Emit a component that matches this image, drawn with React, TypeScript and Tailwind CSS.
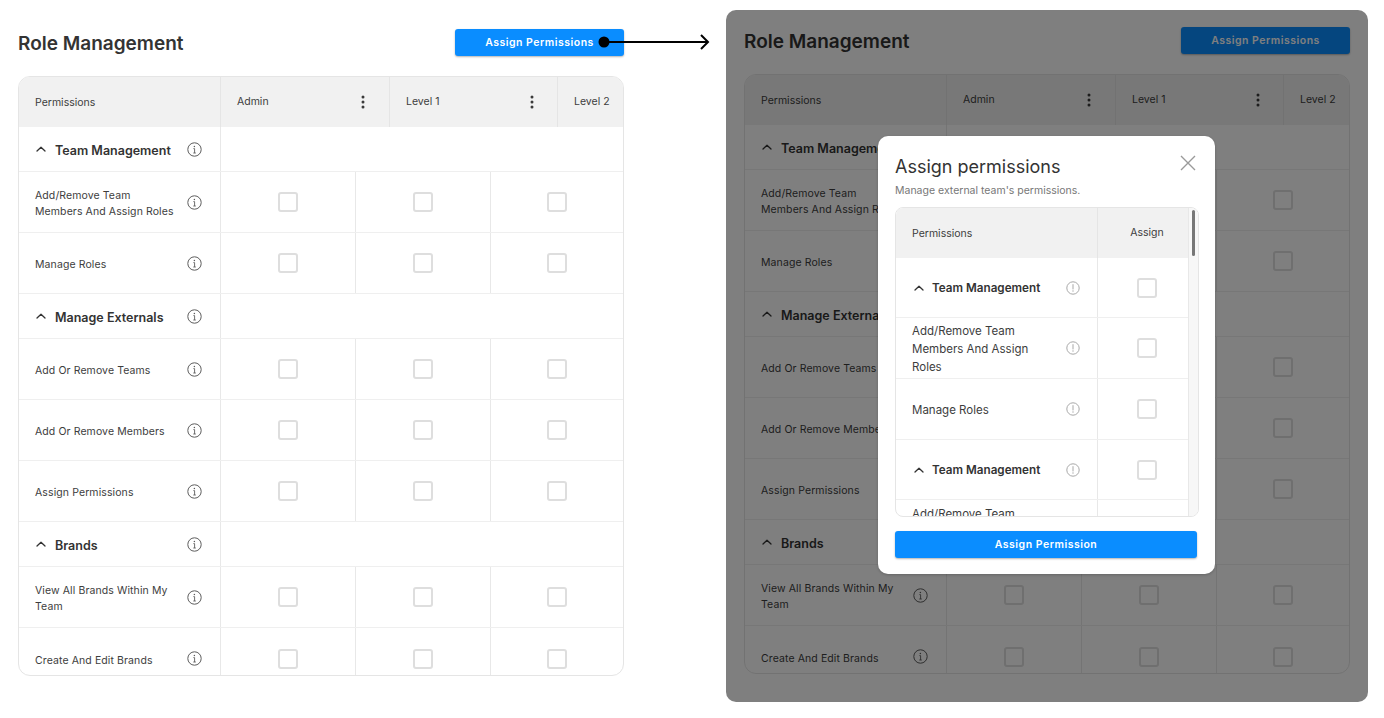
import React from "react";

const FONT = "font-['Inter','Liberation_Sans',sans-serif]";

function Info({ muted = false }: { muted?: boolean }) {
  if (muted) {
    return (
      <svg width="14" height="14" viewBox="0 0 14 14" fill="none" className="shrink-0 text-[#a8a8a8]">
        <circle cx="7" cy="7" r="6.2" stroke="currentColor" strokeWidth="1" />
        <path d="M7 3.6V8" stroke="currentColor" strokeWidth="1" strokeLinecap="round" />
        <circle cx="7" cy="10" r="0.7" fill="currentColor" />
      </svg>
    );
  }
  return (
    <svg width="15" height="15" viewBox="0 0 15 15" fill="none" className="-ml-[1px] mr-[1px] shrink-0 text-[#5c5c5c]">
      <circle cx="7.5" cy="7.5" r="6.7" stroke="currentColor" strokeWidth="1" />
      <path d="M6.4 6.6H7.6V11M6.3 11H8.8" stroke="currentColor" strokeWidth="0.9" />
      <circle cx="7.4" cy="4.4" r="0.75" fill="currentColor" />
    </svg>
  );
}

function Chevron() {
  return (
    <svg width="10" height="6" viewBox="0 0 10 6" fill="none" className="shrink-0">
      <path d="M1 5L5 1.2L9 5" stroke="#333333" strokeWidth="1.3" strokeLinecap="round" strokeLinejoin="round" />
    </svg>
  );
}

function Dots() {
  return (
    <svg width="4" height="14" viewBox="0 0 4 14" className="shrink-0">
      <circle cx="2" cy="2" r="1.5" fill="#3a3a3a" />
      <circle cx="2" cy="7" r="1.5" fill="#3a3a3a" />
      <circle cx="2" cy="12" r="1.5" fill="#3a3a3a" />
    </svg>
  );
}

function Box() {
  return <div className="size-5 rounded-[3px] border-2 border-[#dedede] bg-white" />;
}

function BoxCell() {
  return (
    <div className="flex h-full w-full items-center justify-center pr-[1px]">
      <Box />
    </div>
  );
}

function Section({ label }: { label: string }) {
  return (
    <div className="flex h-[45px] border-b border-[#efefef]">
      <div className="flex w-[202px] shrink-0 items-center border-r border-[#e8e8e8] pl-[17px] pr-[17px]">
        <Chevron />
        <span className="ml-[9px] mt-[4px] flex-1 text-[12.5px] font-semibold text-[#333333]">{label}</span>
        <Info />
      </div>
    </div>
  );
}

function Row({ label, last = false }: { label: string; last?: boolean }) {
  return (
    <div className={`flex h-[61px] border-b border-[#efefef] ${last ? "border-b-0" : ""}`}>
      <div className="flex w-[202px] shrink-0 items-center border-r border-[#e8e8e8] pl-4 pr-[17px]">
        <span className="mt-[4px] flex-1 pr-2 text-[10.5px] leading-4 tracking-[0.1px] text-[#3d3d3d]">{label}</span>
        <Info />
      </div>
      <div className="w-[135px] shrink-0 border-r border-[#e8e8e8]">
        <BoxCell />
      </div>
      <div className="w-[135px] shrink-0 border-r border-[#e8e8e8]">
        <BoxCell />
      </div>
      <div className="flex-1">
        <BoxCell />
      </div>
    </div>
  );
}

function RoleTable() {
  return (
    <div className="h-[600px] overflow-hidden rounded-xl border border-[#e5e5e5] bg-white">
      <div className="flex h-[50px] bg-[#f1f1f1] text-[10.5px] text-[#3d3d3d]">
        <div className="flex w-[202px] shrink-0 items-center border-r border-[#e5e5e5] pl-4 pt-[1px]">Permissions</div>
        <div className="flex w-[169px] shrink-0 items-center justify-between border-r border-[#e5e5e5] pl-4 pr-6">
          <span className="-mt-[1px]">Admin</span>
          <Dots />
        </div>
        <div className="flex w-[168px] shrink-0 items-center justify-between border-r border-[#e5e5e5] pl-4 pr-[23px]">
          <span className="-mt-[1px]">Level 1</span>
          <Dots />
        </div>
        <div className="flex flex-1 items-center pl-4">
          <span className="-mt-[1px]">Level 2</span>
        </div>
      </div>
      <Section label="Team Management" />
      <Row label="Add/Remove Team Members And Assign Roles" />
      <Row label="Manage Roles" />
      <Section label="Manage Externals" />
      <Row label="Add Or Remove Teams" />
      <Row label="Add Or Remove Members" />
      <Row label="Assign Permissions" />
      <Section label="Brands" />
      <Row label="View All Brands Within My Team" />
      <Row label="Create And Edit Brands" last />
    </div>
  );
}

function Board({ dim = false }: { dim?: boolean }) {
  return (
    <div className={`relative h-[692px] w-[642px] shrink-0 overflow-hidden bg-white px-[18px] pt-[17px] ${dim ? "rounded-[10px]" : ""}`}>
      <div className="mb-5 flex h-[27px] items-center justify-between">
        <h1 className="mt-[3px] text-[19px] font-semibold text-[#333333]">Role Management</h1>
        <button className="flex h-[27px] w-[169px] items-center justify-center rounded-[3px] bg-[#0a8dff] text-[10.5px] font-semibold tracking-[0.5px] text-white shadow-[0_1px_2px_rgba(0,0,0,0.3)]">
          Assign Permissions
        </button>
      </div>
      <RoleTable />
      {dim && <Dialog />}
    </div>
  );
}

function ModalRow({ label, h, section = false, clip = false }: { label: string; h: string; section?: boolean; clip?: boolean }) {
  return (
    <div className={`flex ${h} shrink-0 ${clip ? "" : "border-b border-[#efefef]"}`}>
      <div className={`flex w-[202px] shrink-0 border-r border-[#e8e8e8] pr-[17px] ${clip ? "items-start pl-4 pt-[5px]" : "items-center"} ${section ? "pl-[18px]" : "pl-4"}`}>
        {section && <Chevron />}
        {section ? (
          <span className="ml-[8px] mt-[2px] flex-1 text-[11.7px] font-semibold text-[#333333]">{label}</span>
        ) : (
          <span className={`flex-1 pr-[26px] text-[11.5px] leading-[18px] text-[#3d3d3d] ${clip ? "" : "mt-[1px]"}`}>{label}</span>
        )}
        {!clip && <Info muted />}
      </div>
      <div className="flex flex-1 items-center justify-center pl-2">{!clip && <Box />}</div>
    </div>
  );
}

function Dialog() {
  return (
    <div className="absolute inset-0 flex items-center justify-center bg-black/50 pb-[2px] pr-[1px]">
      <div className="relative h-[438px] w-[337px] rounded-[10px] bg-white px-[17px] pt-[19px] shadow-[0_1px_3px_rgba(0,0,0,0.2)]">
        <h2 className="h-6 text-[18px] leading-6 text-[#333333]">Assign permissions</h2>
        <p className="mt-[5px] h-[14px] text-[10.5px] leading-[14px] text-[#777777]">Manage external team's permissions.</p>
        <div className="mt-[9px] flex h-[310px] w-[304px] overflow-hidden rounded-[8px] border border-[#e5e5e5]">
          <div className="w-[293px] shrink-0 border-r border-[#e8e8e8]">
            <div className="flex h-[50px] bg-[#f1f1f1] text-[10.5px] text-[#3d3d3d]">
              <div className="flex w-[202px] shrink-0 items-center border-r border-[#e5e5e5] pl-4 pt-[1px]">Permissions</div>
              <div className="flex flex-1 items-center justify-center pb-[1px] pl-2">Assign</div>
            </div>
            <ModalRow label="Team Management" h="h-[60px]" section />
            <ModalRow label="Add/Remove Team Members And Assign Roles" h="h-[61px]" />
            <ModalRow label="Manage Roles" h="h-[61px]" />
            <ModalRow label="Team Management" h="h-[60px]" section />
            <ModalRow label="Add/Remove Team" h="h-[61px]" clip />
          </div>
          <div className="flex-1 bg-[#f7f7f7] pl-[3px] pt-[2px]">
            <div className="h-[46px] w-[3px] rounded-full bg-[#777777]" />
          </div>
        </div>
        <button className="mt-[14px] flex h-[27px] w-[302px] items-center justify-center rounded-[3px] bg-[#0a8dff] text-[10.5px] font-semibold tracking-[0.5px] text-white shadow-[0_1px_2px_rgba(0,0,0,0.3)]">
          Assign Permission
        </button>
        <svg width="16" height="16" viewBox="0 0 16 16" fill="none" className="absolute right-[19px] top-[19px]">
          <path d="M1 1L15 15M15 1L1 15" stroke="#9a9a9a" strokeWidth="1.4" />
        </svg>
      </div>
    </div>
  );
}

export default function App() {
  return (
    <div className={`relative flex h-[718px] w-[1384px] items-start gap-[84px] overflow-hidden bg-white pt-[10px] ${FONT}`}>
      <div className="mt-[2px]">
        <Board />
      </div>
      <Board dim />
      <svg width="114" height="20" viewBox="0 0 114 20" fill="none" className="absolute left-[598px] top-[32px]">
        <circle cx="6" cy="10" r="5.5" fill="#000000" />
        <path d="M6 10H110" stroke="#000000" strokeWidth="2" />
        <path d="M103 3L110 10L103 17" stroke="#000000" strokeWidth="2" />
      </svg>
    </div>
  );
}
